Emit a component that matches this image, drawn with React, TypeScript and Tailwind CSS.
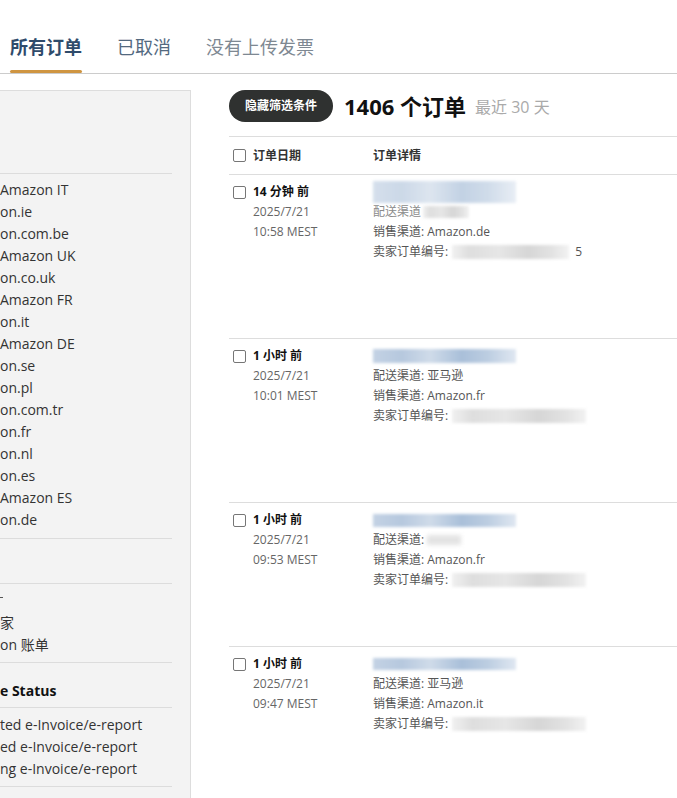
const sites = [
  'Amazon IT',
  'on.ie',
  'on.com.be',
  'Amazon UK',
  'on.co.uk',
  'Amazon FR',
  'on.it',
  'Amazon DE',
  'on.se',
  'on.pl',
  'on.com.tr',
  'on.fr',
  'on.nl',
  'on.es',
  'Amazon ES',
  'on.de',
];

const blueBlur =
  'bg-[linear-gradient(90deg,#c3d2e4,#b6c8de_20%,#cfdbe9_40%,#a9bfd9_62%,#bccde1_80%,#dfe7f1)] blur-[1.5px]';
const greyBlur =
  'bg-[linear-gradient(90deg,#f0f0f0,#dedede_15%,#e6e6e6_40%,#d6d6d6_65%,#e2e2e2_85%,#f2f2f2)] blur-[1.5px]';

type Order = {
  ago: string;
  date: string;
  time: string;
  channel: string;
  height: string;
  nameBar: string;
  ship: 'hidden' | 'partial' | 'full';
  tail: string;
};

const orders: Order[] = [
  { ago: '14 分钟 前', date: '2025/7/21', time: '10:58 MEST', channel: 'Amazon.de', height: 'h-[164px]', nameBar: 'h-[22px] opacity-70', ship: 'hidden', tail: '5' },
  { ago: '1 小时 前', date: '2025/7/21', time: '10:01 MEST', channel: 'Amazon.fr', height: 'h-[164px]', nameBar: 'h-[14px]', ship: 'full', tail: '' },
  { ago: '1 小时 前', date: '2025/7/21', time: '09:53 MEST', channel: 'Amazon.fr', height: 'h-[144px]', nameBar: 'h-[13px]', ship: 'partial', tail: '' },
  { ago: '1 小时 前', date: '2025/7/21', time: '09:47 MEST', channel: 'Amazon.it', height: 'h-[160px]', nameBar: 'h-[12px]', ship: 'full', tail: '' },
];

const Checkbox = () => (
  <span className="block w-[13px] h-[13px] shrink-0 rounded-[2px] border border-[#767676] bg-white"></span>
);

const OrderRow = ({ o }: { o: Order }) => (
  <div className={`flex border-t border-[#dddddd] pt-[7px] ${o.height}`}>
    <div className="flex w-[144px] shrink-0">
      <div className="ml-[4px] mt-[4px]">
        <Checkbox />
      </div>
      <div className="ml-[7px] text-[12px] leading-[20px]">
        <div className="font-bold text-[#111111]">{o.ago}</div>
        <div className="text-[#666666]">{o.date}</div>
        <div className="text-[#666666]">{o.time}</div>
      </div>
    </div>
    <div className="text-[12px] leading-[20px] text-[#555555]">
      <div className="flex h-[20px] items-center">
        <span className={`block w-[143px] ${o.nameBar} ${blueBlur}`}></span>
      </div>
      <div className="flex items-center">
        {o.ship === 'hidden' && (
          <>
            <span className="text-[#8a8a8a]">配送渠道</span>
            <span className={`ml-[2px] inline-block w-[46px] h-[12px] ${greyBlur}`}></span>
          </>
        )}
        {o.ship === 'partial' && (
          <>
            <span>配送渠道: </span>
            <span className="ml-[3px] inline-block w-[34px] h-[10px] bg-[#e3e3e3] blur-[2px]"></span>
          </>
        )}
        {o.ship === 'full' && <span>配送渠道: 亚马逊</span>}
      </div>
      <div>销售渠道: {o.channel}</div>
      <div className="flex items-center">
        <span>卖家订单编号:</span>
        <span className={`ml-[4px] inline-block h-[14px] ${o.tail ? 'w-[117px]' : 'w-[134px]'} ${greyBlur}`}></span>
        {o.tail && <span className="ml-[6px]">{o.tail}</span>}
      </div>
    </div>
  </div>
);

const PanelItem = ({ children }: { children: React.ReactNode }) => (
  <div className="text-[14px] leading-[22px] whitespace-nowrap text-[#333333]">{children}</div>
);

export default function App() {
  return (
    <div className="min-h-[798px] bg-white overflow-hidden font-['Open_Sans','Noto_Sans_CJK_SC',sans-serif]">
      {/* Tabs */}
      <div className="h-[74px] border-b border-[#cccccc] flex items-end gap-[35px] pl-[10px]">
        <div className="flex flex-col">
          <span className="text-[18px] leading-[24px] font-bold text-[#2f4b6b]">所有订单</span>
          <span className="mt-[11px] h-[3px] rounded-full bg-[#cf9541]"></span>
        </div>
        <div className="flex flex-col">
          <span className="text-[18px] leading-[24px] text-[#53697f]">已取消</span>
          <span className="mt-[11px] h-[3px]"></span>
        </div>
        <div className="flex flex-col">
          <span className="text-[18px] leading-[24px] text-[#7e8892]">没有上传发票</span>
          <span className="mt-[11px] h-[3px]"></span>
        </div>
      </div>

      <div className="flex">
        {/* Filter panel */}
        <div className="mt-[16px] w-[191px] shrink-0 h-[720px] bg-[#f3f3f3] border-t border-r border-[#dddddd]">
          <div className="mr-[18px]">
            <div className="h-[83px] border-b border-[#dcdcdc]"></div>
            <div className="pt-[5px] pb-[7px] border-b border-[#dcdcdc]">
              {sites.map((s) => (
                <PanelItem key={s}>{s}</PanelItem>
              ))}
            </div>
            <div className="h-[45px] border-b border-[#dcdcdc]"></div>
            <div className="pt-[6px] pb-[6px] border-b border-[#dcdcdc]">
              <div className="h-[22px] pt-[7px]">
                <span className="block w-[3px] h-[1px] bg-[#555555]"></span>
              </div>
              <PanelItem>家</PanelItem>
              <PanelItem>on 账单</PanelItem>
            </div>
            <div className="pt-[17px] pb-[5px] border-b border-[#dcdcdc]">
              <div className="text-[14px] leading-[22px] font-bold text-[#111111]">e Status</div>
            </div>
            <div className="pt-[6px] pb-[6px] border-b border-[#dcdcdc]">
              <PanelItem>ted e-Invoice/e-report</PanelItem>
              <PanelItem>ed e-Invoice/e-report</PanelItem>
              <PanelItem>ng e-Invoice/e-report</PanelItem>
            </div>
          </div>
        </div>

        {/* Orders */}
        <div className="ml-[38px] flex-1 min-w-0 mt-[16px]">
          <div className="flex items-center mb-[14px]">
            <button className="w-[104px] h-[32px] rounded-full bg-[#2f3130] text-white text-[12px] font-bold">
              隐藏筛选条件
            </button>
            <span className="ml-[11px] text-[22px] leading-[30px] font-bold text-[#111111]">1406 个订单</span>
            <span className="ml-[9px] text-[16px] leading-[30px] text-[#aaaaaa] mt-[2px]">最近 30 天</span>
          </div>
          <div className="flex items-center h-[38px] border-t border-[#dddddd] text-[12px] font-bold text-[#333333]">
            <div className="flex items-center w-[144px]">
              <span className="ml-[4px]">
                <Checkbox />
              </span>
              <span className="ml-[7px]">订单日期</span>
            </div>
            <span>订单详情</span>
          </div>
          {orders.map((o, i) => (
            <OrderRow key={i} o={o} />
          ))}
        </div>
      </div>
    </div>
  );
}
